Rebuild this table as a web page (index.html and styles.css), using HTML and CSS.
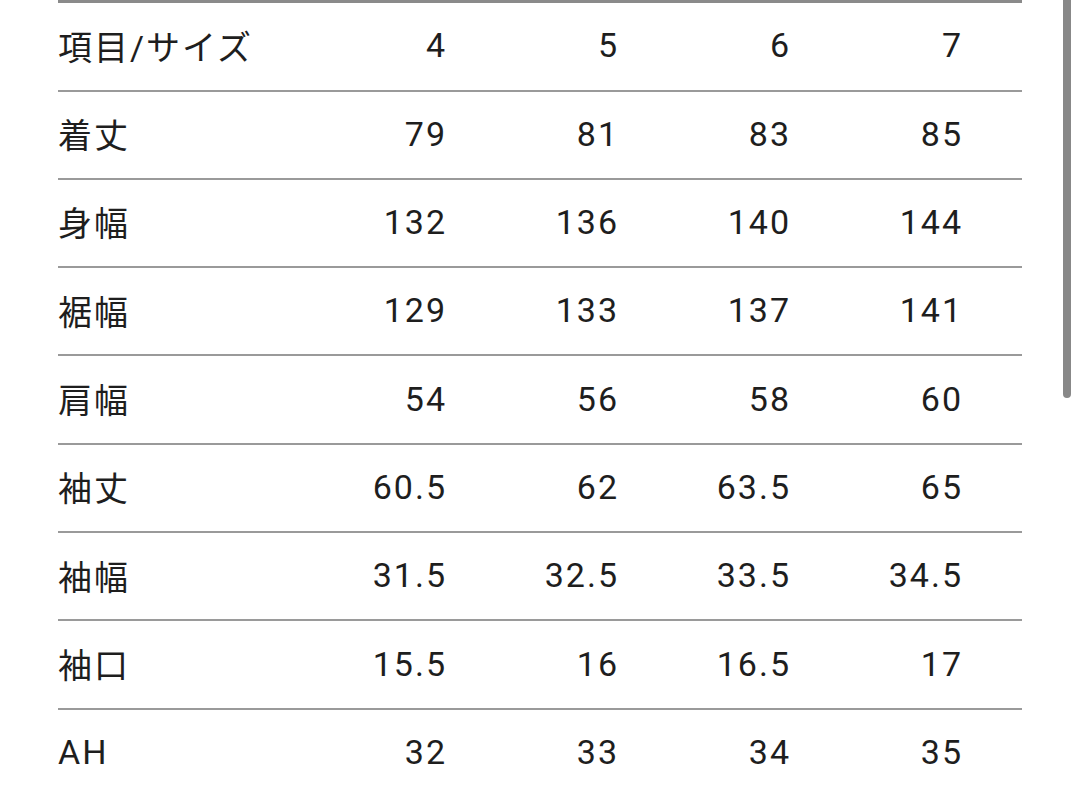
FILE: index.html
```html
<!DOCTYPE html>
<html lang="ja">
<head>
<meta charset="utf-8">
<link rel="stylesheet" href="styles.css">
</head>
<body>
<div class="page">
  <div class="table">
    <div class="row head"><div class="label">項目/サイズ</div><div class="num">4</div><div class="num">5</div><div class="num">6</div><div class="num">7</div></div>
    <div class="row"><div class="label">着丈</div><div class="num">79</div><div class="num">81</div><div class="num">83</div><div class="num">85</div></div>
    <div class="row"><div class="label">身幅</div><div class="num">132</div><div class="num">136</div><div class="num">140</div><div class="num">144</div></div>
    <div class="row"><div class="label">裾幅</div><div class="num">129</div><div class="num">133</div><div class="num">137</div><div class="num">141</div></div>
    <div class="row"><div class="label">肩幅</div><div class="num">54</div><div class="num">56</div><div class="num">58</div><div class="num">60</div></div>
    <div class="row"><div class="label">袖丈</div><div class="num">60.5</div><div class="num">62</div><div class="num">63.5</div><div class="num">65</div></div>
    <div class="row"><div class="label">袖幅</div><div class="num">31.5</div><div class="num">32.5</div><div class="num">33.5</div><div class="num">34.5</div></div>
    <div class="row"><div class="label">袖口</div><div class="num">15.5</div><div class="num">16</div><div class="num">16.5</div><div class="num">17</div></div>
    <div class="row"><div class="label">AH</div><div class="num">32</div><div class="num">33</div><div class="num">34</div><div class="num">35</div></div>
  </div>
  <div class="scrollbar"></div>
</div>
</body>
</html>
```
FILE: styles.css
```css
html, body {
  margin: 0;
  padding: 0;
  background: #fff;
}
.page {
  position: relative;
  width: 1080px;
  height: 795px;
  overflow: hidden;
  padding-left: 58px;
  box-sizing: border-box;
}
.table {
  width: 964px;
  border-top: 3px solid #8a8a8a;
  font-family: Roboto, "Noto Sans CJK JP", sans-serif;
  color: #1e1e1e;
  font-size: 34px;
}
.row {
  display: grid;
  grid-template-columns: 276px repeat(4, 172px);
  height: 84.33px;
  padding-bottom: 2px;
  align-items: center;
  border-bottom: 2px solid #9a9a9a;
}
.row.head {
  height: 84.5px;
}
.label {
  letter-spacing: 2px;
}
.num {
  text-align: right;
  padding-right: 61px;
  letter-spacing: 2px;
  margin-right: -2px;
}
.scrollbar {
  position: absolute;
  top: 0;
  left: 1063px;
  width: 8px;
  height: 398px;
  background: #888;
  border-radius: 0 0 4px 4px;
}
```
